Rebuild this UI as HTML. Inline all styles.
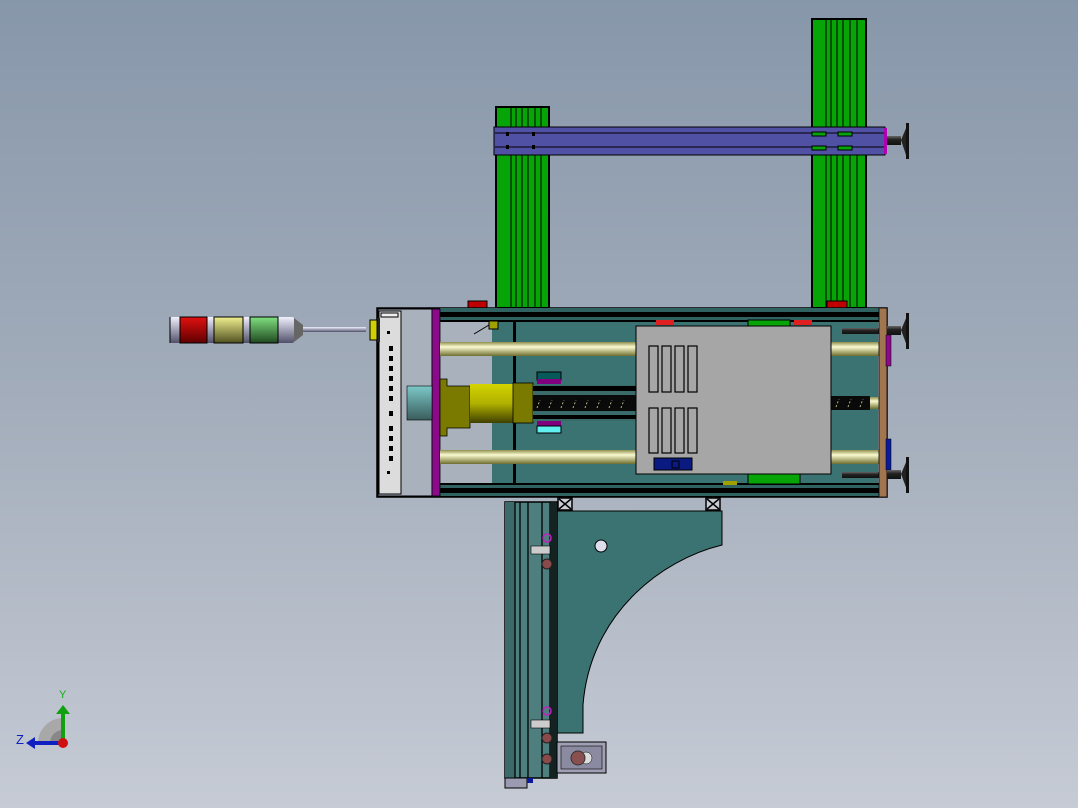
<!DOCTYPE html>
<html><head><meta charset="utf-8"><style>
html,body{margin:0;padding:0;width:1078px;height:808px;overflow:hidden}
svg{display:block}
</style></head><body>
<svg width="1078" height="808" viewBox="0 0 1078 808" xmlns="http://www.w3.org/2000/svg">
<defs>
<linearGradient id="bg" x1="0" y1="0" x2="0" y2="1"><stop offset="0" stop-color="#8797aa"/><stop offset="0.5" stop-color="#a3adbb"/><stop offset="1" stop-color="#c6cbd5"/></linearGradient>
<linearGradient id="rod" x1="0" y1="0" x2="0" y2="1"><stop offset="0" stop-color="#8f8f50"/><stop offset="0.35" stop-color="#fafad0"/><stop offset="1" stop-color="#6e6e30"/></linearGradient>
<linearGradient id="ylw" x1="0" y1="0" x2="0" y2="1"><stop offset="0" stop-color="#d4d400"/><stop offset="0.5" stop-color="#b0b000"/><stop offset="1" stop-color="#404000"/></linearGradient>
<linearGradient id="cyl" x1="0" y1="0" x2="0" y2="1"><stop offset="0" stop-color="#7cc8c8"/><stop offset="1" stop-color="#3a5c5c"/></linearGradient>
<linearGradient id="red" x1="0" y1="0" x2="0" y2="1"><stop offset="0" stop-color="#e01010"/><stop offset="1" stop-color="#600000"/></linearGradient>
<linearGradient id="yel2" x1="0" y1="0" x2="0" y2="1"><stop offset="0" stop-color="#f0f090"/><stop offset="1" stop-color="#505020"/></linearGradient>
<linearGradient id="grn2" x1="0" y1="0" x2="0" y2="1"><stop offset="0" stop-color="#80e080"/><stop offset="1" stop-color="#204820"/></linearGradient>
<linearGradient id="wht" x1="0" y1="0" x2="0" y2="1"><stop offset="0" stop-color="#f0f0ff"/><stop offset="1" stop-color="#50506a"/></linearGradient>
<linearGradient id="blk" x1="0" y1="0" x2="0" y2="1"><stop offset="0" stop-color="#666"/><stop offset="0.4" stop-color="#222"/><stop offset="1" stop-color="#111"/></linearGradient>
</defs>
<rect width="1078" height="808" fill="url(#bg)"/>

<g stroke="#000" stroke-width="1">
<rect x="496" y="107" width="53" height="201" fill="#06a406" stroke-width="2"/>
<rect x="812" y="19" width="54" height="289" fill="#06a406" stroke-width="2"/>
</g>
<g stroke="#000" stroke-width="1">
<path d="M511 108V308M516 108V308M522 108V308M528 108V308M535 108V308M541 108V308"/>
<path d="M826 20V308M831 20V308M837 20V308M843 20V308M850 20V308M857 20V308"/>
</g>
<rect x="494" y="127" width="391" height="28" fill="#5050a4" stroke="#000" stroke-width="1"/>
<path d="M495 133H884M495 147H884" stroke="#000" stroke-width="1"/>
<rect x="884" y="128" width="3" height="26" fill="#b000b0"/>
<rect x="506" y="132" width="3" height="4" fill="#000"/><rect x="532" y="132" width="3" height="4" fill="#000"/>
<rect x="506" y="145" width="3" height="4" fill="#000"/><rect x="532" y="145" width="3" height="4" fill="#000"/>
<rect x="812" y="132" width="14" height="4" fill="#06a406" stroke="#000"/><rect x="838" y="132" width="14" height="4" fill="#06a406" stroke="#000"/>
<rect x="812" y="146" width="14" height="4" fill="#06a406" stroke="#000"/><rect x="838" y="146" width="14" height="4" fill="#06a406" stroke="#000"/>
<rect x="887" y="136" width="14" height="9" fill="url(#blk)"/>
<path d="M901 140L907 126V158Z" fill="#222"/><rect x="906" y="123" width="3" height="36" fill="#111"/>

<rect x="468" y="301" width="19" height="7" fill="#c00000" stroke="#000"/>
<rect x="827" y="301" width="20" height="7" fill="#c00000" stroke="#000"/>

<rect x="377" y="308" width="510" height="189" fill="#a9b1bd" stroke="#000" stroke-width="1.5"/>
<rect x="492" y="322" width="386" height="162" fill="#3a7372"/>
<rect x="513" y="322" width="3" height="162" fill="#000"/>
<rect x="440" y="308" width="439" height="14" fill="#306262"/>
<rect x="440" y="312" width="439" height="5" fill="#000"/><rect x="440" y="320" width="439" height="2" fill="#000"/>
<rect x="440" y="483" width="439" height="14" fill="#306262"/>
<rect x="440" y="483" width="439" height="2" fill="#000"/><rect x="440" y="488" width="439" height="5" fill="#000"/><rect x="440" y="496" width="439" height="1.5" fill="#000"/>
<rect x="378" y="309" width="54" height="187" fill="#a9b1bd" stroke="#000"/>
<rect x="379" y="311" width="22" height="183" fill="#dcdcdc" stroke="#000"/>
<rect x="381" y="313" width="17" height="4" fill="#eee" stroke="#000"/>
<g fill="#000">
<rect x="387" y="331" width="3" height="3"/>
<rect x="389" y="346" width="4" height="5"/><rect x="389" y="356" width="4" height="5"/><rect x="389" y="366" width="4" height="5"/><rect x="389" y="376" width="4" height="5"/><rect x="389" y="386" width="4" height="5"/><rect x="389" y="396" width="4" height="5"/><rect x="389" y="411" width="4" height="5"/><rect x="389" y="426" width="4" height="5"/><rect x="389" y="436" width="4" height="5"/><rect x="389" y="446" width="4" height="5"/><rect x="389" y="456" width="4" height="5"/><rect x="387" y="471" width="3" height="3"/>
</g>
<rect x="432" y="309" width="8" height="187" fill="#8a0a8a" stroke="#000" stroke-width="0.8"/>
<rect x="376" y="318" width="4" height="24" fill="#222"/>
<rect x="370" y="320" width="7" height="20" fill="#d0d000" stroke="#000"/>
<rect x="440" y="342" width="439" height="14" fill="url(#rod)"/>
<rect x="440" y="450" width="439" height="14" fill="url(#rod)"/>
<rect x="407" y="386" width="25" height="34" fill="url(#cyl)" stroke="#000" stroke-width="0.6"/>
<path d="M440 379H447V386H470V428H447V436H440Z" fill="#7a7a00" stroke="#000" stroke-width="0.8"/>
<rect x="470" y="384" width="43" height="39" fill="url(#ylw)"/>
<rect x="513" y="383" width="20" height="40" fill="#7a7a00" stroke="#000" stroke-width="0.8"/>
<rect x="533" y="385" width="104" height="36" fill="#3a6a6a"/>
<rect x="533" y="386" width="104" height="5" fill="#000"/><rect x="533" y="395" width="104" height="16" fill="#0a0a0a"/><rect x="533" y="415" width="104" height="4" fill="#000"/>
<g stroke="#b8b880" stroke-width="1" stroke-dasharray="2 2">
<path d="M537 408l3-8M549 408l3-8M561 408l3-8M573 408l3-8M585 408l3-8M597 408l3-8M609 408l3-8M621 408l3-8"/>
</g>
<rect x="831" y="397" width="48" height="12" fill="url(#rod)"/>
<rect x="831" y="396" width="39" height="14" fill="#0a0a0a"/>
<g stroke="#b8b880" stroke-dasharray="2 2"><path d="M836 407l3-8M848 407l3-8M860 407l3-8"/></g>
<rect x="537" y="372" width="24" height="8" fill="#085a5a" stroke="#000"/><rect x="537" y="379" width="24" height="5" fill="#800080"/>
<rect x="537" y="421" width="24" height="5" fill="#800080"/><rect x="537" y="426" width="24" height="7" fill="#60f0f0" stroke="#000"/>
<rect x="489" y="321" width="9" height="8" fill="#a0a000" stroke="#000"/>
<path d="M474 334L489 325" stroke="#000"/>
<rect x="748" y="320" width="42" height="6" fill="#06a406" stroke="#000"/>
<rect x="656" y="320" width="18" height="5" fill="#e02020"/><rect x="794" y="320" width="18" height="5" fill="#e02020"/>
<rect x="748" y="474" width="52" height="10" fill="#06a406" stroke="#000"/>
<rect x="723" y="481" width="14" height="4" fill="#a0a000"/>
<rect x="636" y="326" width="195" height="148" fill="#a6a6a6" stroke="#000" stroke-width="1"/>
<g fill="none" stroke="#000" stroke-width="1.2">
<rect x="649" y="346" width="9" height="46"/><rect x="662" y="346" width="9" height="46"/><rect x="675" y="346" width="9" height="46"/><rect x="688" y="346" width="9" height="46"/>
<rect x="649" y="408" width="9" height="45"/><rect x="662" y="408" width="9" height="45"/><rect x="675" y="408" width="9" height="45"/><rect x="688" y="408" width="9" height="45"/>
</g>
<rect x="654" y="458" width="38" height="12" fill="#0a1a80" stroke="#000"/>
<rect x="672" y="461" width="7" height="7" fill="none" stroke="#000"/>
<rect x="842" y="328" width="37" height="6" fill="url(#blk)"/>
<rect x="842" y="472" width="37" height="6" fill="url(#blk)"/>
<rect x="879" y="308" width="8" height="189" fill="#a07650" stroke="#000" stroke-width="0.8"/>
<rect x="886" y="335" width="5" height="31" fill="#8a0a8a" stroke="#000" stroke-width="0.5"/>
<rect x="886" y="439" width="5" height="31" fill="#0a1a9a" stroke="#000" stroke-width="0.5"/>
<rect x="887" y="326" width="14" height="9" fill="url(#blk)"/><path d="M901 330L907 316V346Z" fill="#222"/><rect x="906" y="313" width="3" height="36" fill="#111"/>
<rect x="887" y="470" width="14" height="9" fill="url(#blk)"/><path d="M901 474L907 460V490Z" fill="#222"/><rect x="906" y="457" width="3" height="36" fill="#111"/>

<rect x="300" y="327" width="66" height="5" fill="url(#wht)"/>
<path d="M294 318L303 325V335L294 342Z" fill="#666"/>
<rect x="170" y="317" width="124" height="26" fill="url(#wht)" rx="2"/>
<rect x="180" y="317" width="27" height="26" fill="url(#red)" stroke="#000"/>
<rect x="214" y="317" width="29" height="26" fill="url(#yel2)" stroke="#000"/>
<rect x="250" y="317" width="28" height="26" fill="url(#grn2)" stroke="#000"/>
<path d="M170 317V343" stroke="#000"/>

<path d="M557 511H722V545C660 560 590 615 583 705V733H557Z" fill="#3a7372" stroke="#000" stroke-width="1"/>
<circle cx="601" cy="546" r="6" fill="#dde" stroke="#000"/>
<g fill="#c8ccd4" stroke="#000" stroke-width="1.5"><rect x="558" y="498" width="14" height="12"/><rect x="706" y="498" width="14" height="12"/></g>
<g stroke="#000" stroke-width="1.5"><path d="M559 499l12 10M571 499l-12 10M707 499l12 10M719 499l-12 10"/></g>
<rect x="505" y="502" width="52" height="276" fill="#4e7e7e" stroke="#000" stroke-width="1.5"/>
<rect x="505" y="502" width="10" height="276" fill="#3c6a6a"/>
<g stroke="#000" stroke-width="1.3"><path d="M515 502V778M520 502V778M528 502V778M542 502V778M550 502V778"/></g>
<rect x="550" y="503" width="7" height="275" fill="#142222"/>
<rect x="531" y="546" width="19" height="8" fill="#ccc" stroke="#000" stroke-width="0.6"/>
<rect x="531" y="720" width="19" height="8" fill="#ccc" stroke="#000" stroke-width="0.6"/>
<circle cx="547" cy="538" r="4" fill="none" stroke="#c020c0" stroke-width="1.5"/>
<circle cx="547" cy="711" r="4" fill="none" stroke="#c020c0" stroke-width="1.5"/>
<circle cx="547" cy="564" r="5" fill="#8a4a4a" stroke="#222"/>
<circle cx="547" cy="738" r="5" fill="#8a4a4a" stroke="#222"/>
<circle cx="547" cy="759" r="5" fill="#8a4a4a" stroke="#222"/>
<rect x="505" y="778" width="22" height="10" fill="#9a9ab0" stroke="#000"/>
<rect x="527" y="778" width="6" height="5" fill="#0a1a9a"/>
<rect x="557" y="742" width="49" height="31" fill="#a0a0b4" stroke="#000"/>
<rect x="561" y="746" width="41" height="23" fill="#8a8aa0" stroke="#000" stroke-width="0.6"/>
<circle cx="586" cy="758" r="6" fill="#ddd" stroke="#000" stroke-width="0.5"/>
<circle cx="578" cy="758" r="7" fill="#8a5050" stroke="#333"/>

<path d="M38 743A25 25 0 0 1 63 718V743Z" fill="#a8a8a8"/>
<path d="M50 743A13 13 0 0 1 63 730V743Z" fill="#888"/>
<rect x="61" y="713" width="4" height="30" fill="#10a010"/>
<path d="M56 714L63 705L70 714Z" fill="#10a010"/>
<rect x="34" y="741" width="29" height="4" fill="#1020c0"/>
<path d="M35 737L26 743L35 749Z" fill="#1020c0"/>
<circle cx="63" cy="743" r="5" fill="#d01010"/>
<text x="59" y="698" font-family="Liberation Sans, sans-serif" font-size="11" fill="#10b010">Y</text>
<text x="16" y="744" font-family="Liberation Sans, sans-serif" font-size="13" fill="#1020c0">Z</text>
</svg>
</body></html>
